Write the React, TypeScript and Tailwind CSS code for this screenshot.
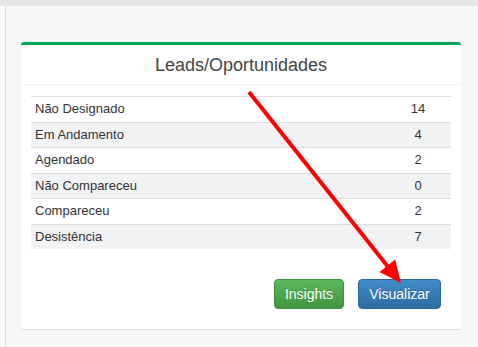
const rows: { label: string; value: number }[] = [
    { label: "Não Designado", value: 14 },
    { label: "Em Andamento", value: 4 },
    { label: "Agendado", value: 2 },
    { label: "Não Compareceu", value: 0 },
    { label: "Compareceu", value: 2 },
    { label: "Desistência", value: 7 },
];

export default function App() {
    return (
        <div
            className="relative w-[478px] h-[347px] overflow-hidden bg-[#f7f7f7] text-[#333]"
            style={{ fontFamily: '"Liberation Sans", Arial, sans-serif' }}
        >
            <div className="h-[6px] bg-[#e7e7e7]" />
            <div className="flex h-[341px]">
                <div className="w-[6px] shrink-0 bg-[#fbfbfb] border-r border-[#dedede]" />
                <div className="pl-[15px] pt-[36px]">
                    <div className="w-[440px] h-[287px] bg-white rounded-[3px] border-t-[3px] border-[#00a65a] shadow-[0_1px_1px_rgba(0,0,0,0.12)] flex flex-col">
                        <div className="h-[40px] border-b border-[#f2f2f2] flex items-center justify-center">
                            <h3 className="text-[18px] leading-none text-[#444]">Leads/Oportunidades</h3>
                        </div>
                        <div className="px-[10px] pt-[11px]">
                            <table className="w-[420px] border-collapse text-[13px] leading-[18.57px]">
                                <tbody>
                                    {rows.map((row, index) => (
                                        <tr
                                            key={row.label}
                                            className={index % 2 === 1 ? "bg-[#f1f2f4]" : "bg-white"}
                                        >
                                            <td className="border-t border-[#dddddd] py-[3px] pl-[4px]">{row.label}</td>
                                            <td className="border-t border-[#dddddd] py-[3px] w-[66px] text-center">
                                                {row.value}
                                            </td>
                                        </tr>
                                    ))}
                                </tbody>
                            </table>
                        </div>
                        <div className="mt-auto mb-[20px] mr-[20px] flex justify-end gap-[14px]">
                            <button className="h-[30px] w-[70px] rounded-[4px] border border-[#3e8f3e] bg-gradient-to-b from-[#5cb85c] to-[#419641] text-[14px] text-white [text-shadow:0_-1px_0_rgba(0,0,0,0.2)]">
                                Insights
                            </button>
                            <button className="h-[30px] w-[83px] rounded-[4px] border border-[#2b669a] bg-gradient-to-b from-[#428bca] to-[#2d6ca2] text-[14px] text-white [text-shadow:0_-1px_0_rgba(0,0,0,0.2)]">
                                Visualizar
                            </button>
                        </div>
                    </div>
                </div>
            </div>
            <svg className="absolute inset-0 pointer-events-none" width="478" height="347" viewBox="0 0 478 347">
                <line x1="249" y1="92" x2="389" y2="268" stroke="#ff0000" strokeWidth="4" />
                <polygon points="401,283 379.5,272 395.1,259.6" fill="#ff0000" />
            </svg>
        </div>
    );
}
